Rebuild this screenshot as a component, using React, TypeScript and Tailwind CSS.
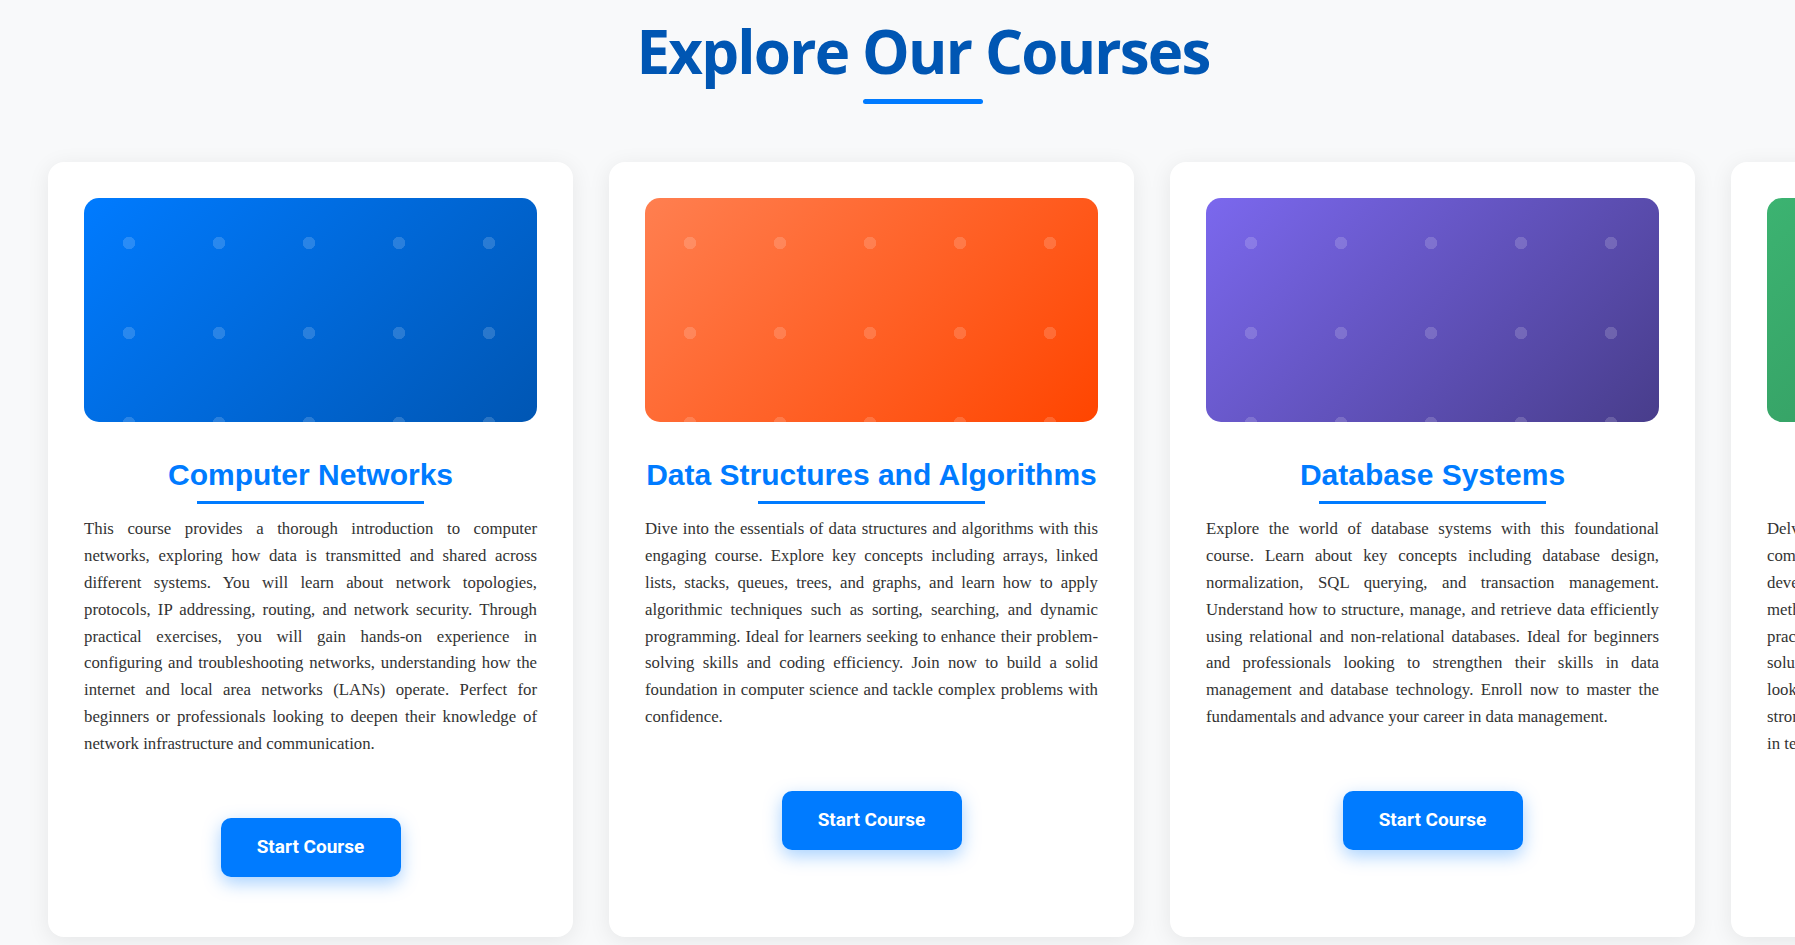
import React from 'react';

interface Course {
  title: string;
  description: string;
  gradient: string;
}

const courses: Course[] = [
  {
    title: 'Computer Networks',
    description:
      'This course provides a thorough introduction to computer networks, exploring how data is transmitted and shared across different systems. You will learn about network topologies, protocols, IP addressing, routing, and network security. Through practical exercises, you will gain hands-on experience in configuring and troubleshooting networks, understanding how the internet and local area networks (LANs) operate. Perfect for beginners or professionals looking to deepen their knowledge of network infrastructure and communication.',
    gradient: 'bg-[linear-gradient(135deg,#007bff,#0056b3)]',
  },
  {
    title: 'Data Structures and Algorithms',
    description:
      'Dive into the essentials of data structures and algorithms with this engaging course. Explore key concepts including arrays, linked lists, stacks, queues, trees, and graphs, and learn how to apply algorithmic techniques such as sorting, searching, and dynamic programming. Ideal for learners seeking to enhance their problem-solving skills and coding efficiency. Join now to build a solid foundation in computer science and tackle complex problems with confidence.',
    gradient: 'bg-[linear-gradient(135deg,#ff7f50,#ff4500)]',
  },
  {
    title: 'Database Systems',
    description:
      'Explore the world of database systems with this foundational course. Learn about key concepts including database design, normalization, SQL querying, and transaction management. Understand how to structure, manage, and retrieve data efficiently using relational and non-relational databases. Ideal for beginners and professionals looking to strengthen their skills in data management and database technology. Enroll now to master the fundamentals and advance your career in data management.',
    gradient: 'bg-[linear-gradient(135deg,#7b68ee,#483d8b)]',
  },
  {
    title: 'Software Engineering',
    description:
      'Delve into the world of software engineering with this hands-on comprehensive course. Learn about requirements analysis, agile development, system design, testing, and modern deployment methodologies. Through guided projects, you will gain solid practical experience in building reliable, scalable, and efficient solutions. Ideal for aspiring software developers and professionals looking to sharpen their coding and engineering skills and build a strong foundation for a successful and rewarding long-term career in technology.',
    gradient: 'bg-[linear-gradient(135deg,#3cb371,#2e8b57)]',
  },
];

const CourseCard: React.FC<{ course: Course }> = ({ course }) => (
  <div className="flex w-[525px] flex-none flex-col rounded-[16px] bg-white p-[36px] pb-[60px] shadow-[0_4px_22px_rgba(0,0,0,0.08)]">
    <div className={`h-[224px] overflow-hidden rounded-[15px] ${course.gradient}`}>
      <div className="h-full w-full bg-[radial-gradient(circle,rgba(255,255,255,0.16)_6px,transparent_6.5px)] bg-size-[90px_90px]" />
    </div>
    <h3 className="mt-[35px] text-center font-['Liberation_Sans',Arial,sans-serif] text-[30px] leading-[36px] font-bold whitespace-nowrap text-[#007bff]">
      {course.title}
    </h3>
    <div className="mx-auto mt-[8px] h-[3px] w-1/2 bg-[#007bff]" />
    <p className="mt-[12px] text-justify font-['Liberation_Serif','Times_New_Roman',serif] text-[16.8px] leading-[1.6] text-[#333]">
      {course.description}
    </p>
    <button className="mx-auto mt-[60px] h-[59px] w-[180px] rounded-[10px] bg-[#007bff] font-[Roboto,sans-serif] text-[19px] font-bold text-white shadow-[0_6px_18px_rgba(0,123,255,0.35)]">
      Start Course
    </button>
  </div>
);

export default function App() {
  return (
    <div className="h-screen overflow-hidden bg-[#f8f9fa]">
      <div className="pt-[15px] pl-[51px] text-center">
        <h1 className="font-['Open_Sans','Noto_Sans',sans-serif] text-[60px] leading-[1.2] font-bold tracking-[-1.8px] text-[#0056b3]">
          Explore Our Courses
        </h1>
        <div className="mx-auto mt-[12px] h-[5px] w-[120px] rounded-full bg-[#007bff]" />
      </div>
      <div className="mt-[58px] flex items-stretch gap-[36px] pl-[48px]">
        {courses.map((c) => (
          <CourseCard key={c.title} course={c} />
        ))}
      </div>
    </div>
  );
}
